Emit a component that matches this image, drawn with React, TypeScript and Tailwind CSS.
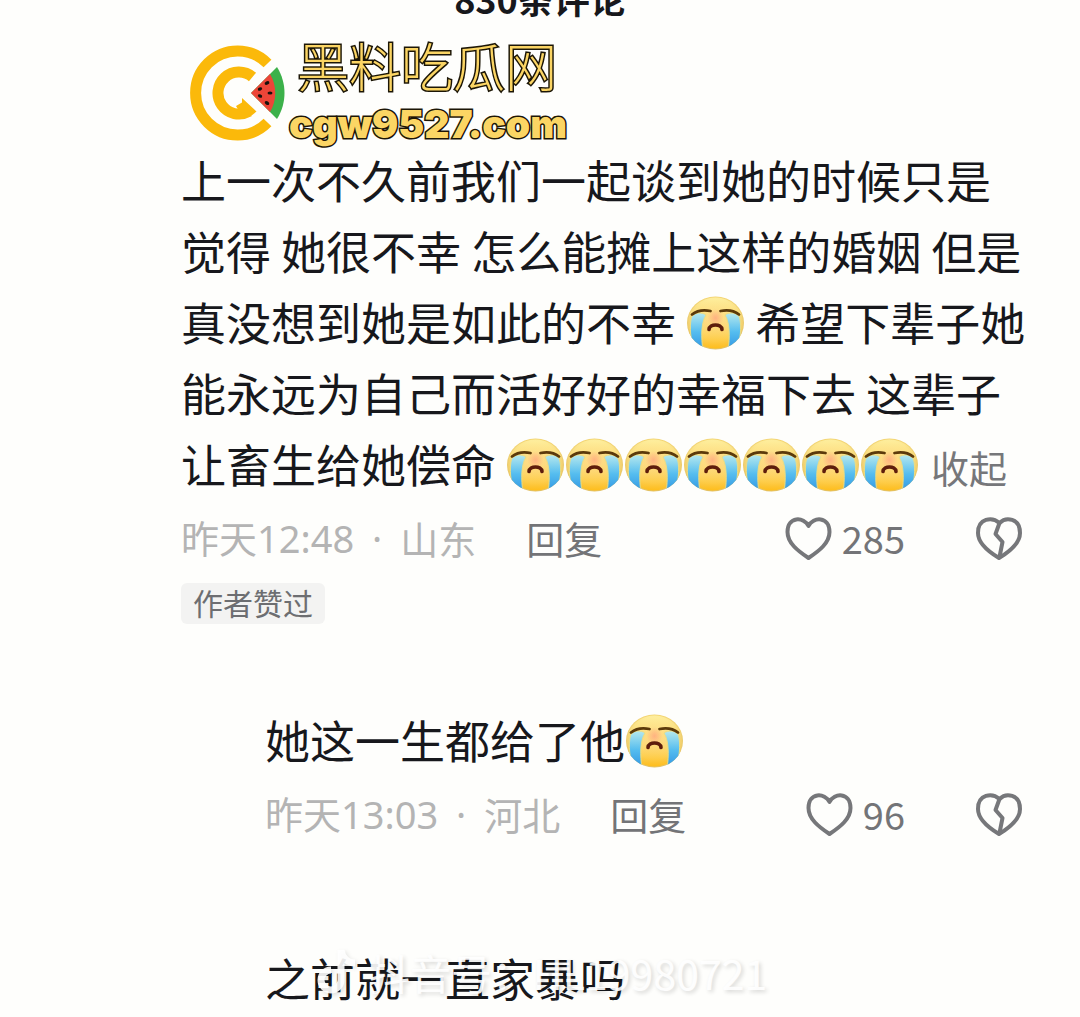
import type { ReactNode } from "react";

function CryFace() {
  return (
    <svg viewBox="0 0 59 56" className="inline-block h-[56px] w-[59px] align-[-10px]" role="img" aria-label="crying">
      <defs>
        <radialGradient id="face" cx="50%" cy="45%" r="56%">
          <stop offset="0" stopColor="#ffd98a" />
          <stop offset="0.7" stopColor="#fce07c" />
          <stop offset="1" stopColor="#dfbd62" />
        </radialGradient>
        <linearGradient id="chin" x1="0" y1="0" x2="0" y2="1">
          <stop offset="0" stopColor="#fff3a8" stopOpacity="0.8" />
          <stop offset="0.45" stopColor="#fdd97a" stopOpacity="0.2" />
          <stop offset="1" stopColor="#ffbe1c" />
        </linearGradient>
        <radialGradient id="nose">
          <stop offset="0" stopColor="#ffae80" stopOpacity="0.9" />
          <stop offset="1" stopColor="#ffae80" stopOpacity="0" />
        </radialGradient>
        <linearGradient id="tear" x1="0" y1="0" x2="0" y2="1">
          <stop offset="0" stopColor="#b5e8ee" />
          <stop offset="0.5" stopColor="#55bdef" />
          <stop offset="1" stopColor="#2f93e2" />
        </linearGradient>
        <clipPath id="head">
          <ellipse cx="29.5" cy="28" rx="28.5" ry="26.5" />
        </clipPath>
      </defs>
      <ellipse cx="29.5" cy="28" rx="28.5" ry="26.5" fill="url(#face)" />
      <ellipse cx="29.5" cy="28" rx="27.5" ry="25.5" fill="url(#chin)" />
      <ellipse cx="29.5" cy="23" rx="8" ry="9" fill="url(#nose)" />
      <g clipPath="url(#head)" fill="url(#tear)" stroke="#e8dc86" strokeWidth="1">
        <path d="M5.500 22C9 17 16 17 20 20C15 28 15 42 17 56H8C5 46 3 32 5.500 22Z" />
        <path d="M53.500 22C50 17 43 17 39 20C44 28 44 42 42 56H51C54 46 56 32 53.500 22Z" />
      </g>
      <path d="M6 19.500C11 15.500 17 14.500 24.500 16M53 19.500C48 15.500 42 14.500 34.500 16" fill="none" stroke="#5c3a0b" strokeWidth="2.800" strokeLinecap="round" />
      <path d="M23 34.500C23.500 28.500 35.500 28.500 36 34.500" fill="none" stroke="#5e1d0c" strokeWidth="3.600" strokeLinecap="round" />
    </svg>
  );
}

function Heart() {
  return (
    <svg viewBox="0 0 47 46" className="h-[46px] w-[47px]" fill="none" stroke="#76777a" strokeWidth="4" strokeLinejoin="round" aria-hidden="true">
      <path d="M23.500 11C19 1.500 2.500 1 2.500 17C2.500 28 13 36 23.500 43C34 36 44.500 28 44.500 17C44.500 1 28 1.500 23.500 11Z" />
    </svg>
  );
}

function BrokenHeart() {
  return (
    <svg viewBox="0 0 47 46" className="h-[46px] w-[47px]" fill="none" stroke="#76777a" strokeWidth="4" strokeLinejoin="round" aria-hidden="true">
      <path d="M24.500 8C17 1.500 3 3 3 18C3 29 14 37 24 43C34 37 45 29 45 18C45 3 31 1.500 24.500 8Z" />
      <path d="M24.500 8L20.500 19L27.500 27L24.500 42" />
    </svg>
  );
}

function Logo() {
  return (
    <svg viewBox="0 0 95 96" className="h-[96px] w-[95px] shrink-0 overflow-visible" aria-hidden="true">
      <g fill="none" stroke="#fbb90a" strokeWidth="11">
        <path d="M76.500 18.500A42 42 0 1 0 76.500 77.500" />
        <path d="M61.500 32A21 21 0 1 0 58 66.500" />
      </g>
      <path d="M51 53L65.500 66.500L60 71L48 66L45 61L51 57.500Z" fill="#fbb90a" />
      <path d="M60 48L86 22C96 38 96 58 86 74Z" fill="#3cb14a" />
      <path d="M60 48L79 29C86 41 86 55 79 67Z" fill="#ec4538" />
      <g fill="#17110c">
        <ellipse cx="76" cy="38" rx="2.500" ry="1.700" transform="rotate(-25 76 38)" />
        <ellipse cx="69" cy="44" rx="2.300" ry="1.600" transform="rotate(-25 69 44)" />
        <ellipse cx="79" cy="48" rx="2.500" ry="1.600" />
        <ellipse cx="69" cy="51" rx="2.300" ry="1.600" transform="rotate(25 69 51)" />
        <ellipse cx="76" cy="58" rx="2.500" ry="1.700" transform="rotate(35 76 58)" />
      </g>
    </svg>
  );
}

function Meta({ time, place, likes }: { time: string; place: string; likes: number }) {
  return (
    <div className="mt-[11px] flex h-[56px] items-center justify-between text-[38px] leading-[56px] whitespace-nowrap text-[#737477]">
      <div className="flex items-center">
        <span className="font-['Noto_Sans','Noto_Sans_CJK_SC',sans-serif] text-[#b4b4b4]">{time}</span>
        <span className="w-[46px] text-center font-['Noto_Sans',sans-serif] text-[#b4b4b4]">·</span>
        <span className="text-[#b4b4b4]">{place}</span>
        <button type="button" className="ml-[50px]">回复</button>
      </div>
      <div className="flex items-center gap-[70px]">
        <button type="button" aria-label={`${likes} likes`} className="flex items-center gap-[10px]">
          <Heart />
          <span>{likes}</span>
        </button>
        <button type="button" aria-label="Dislike">
          <BrokenHeart />
        </button>
      </div>
    </div>
  );
}

function CommentText({ children }: { children: ReactNode }) {
  return <p className="text-[45px] leading-[71px] whitespace-nowrap text-[#17181c]">{children}</p>;
}

export default function App() {
  return (
    <main className="min-h-screen overflow-hidden bg-[#fefefc] pr-[58px] pl-[181px] font-['Noto_Sans_CJK_SC','Noto_Sans',sans-serif]">
      <header className="-mr-[58px] -ml-[181px] flex h-[20px] items-end justify-center overflow-hidden">
        <h1 className="text-[36px] leading-[44px] font-bold text-[#17181c]">830条评论</h1>
      </header>

      <div className="flex h-[124px] items-start pt-[25px] pl-[10px]">
        <Logo />
        <div className="text-[#fbd564] [-webkit-text-stroke:3px_#1c1606] [paint-order:stroke_fill]">
          <div className="-mt-[10px] ml-[11px] text-[52px] leading-[60px] font-light">黑料吃瓜网</div>
          <div className="mt-[7px] ml-[3px] font-['Inter'] text-[39px] leading-[44px] font-black">cgw9527.com</div>
        </div>
      </div>

      <article>
        <CommentText>
          上一次不久前我们一起谈到她的时候只是
          <br />
          觉得 她很不幸 怎么能摊上这样的婚姻 但是
          <br />
          真没想到她是如此的不幸 <CryFace /> 希望下辈子她
          <br />
          能永远为自己而活好好的幸福下去 这辈子
          <br />
          让畜生给她偿命 <CryFace />
          <CryFace />
          <CryFace />
          <CryFace />
          <CryFace />
          <CryFace />
          <CryFace />
          <button type="button" className="ml-[12px] text-[38px] leading-[56px] text-[#76777a]">收起</button>
        </CommentText>
        <Meta time="昨天12:48" place="山东" likes={285} />
        <span className="mt-[17px] inline-block h-[41px] rounded-md bg-[#f3f3f2] px-[12px] text-[30px] leading-[39px] text-[#6d6e71]">作者赞过</span>
      </article>

      <article className="mt-[80px] pl-[84px]">
        <CommentText>
          她这一生都给了他
          <CryFace />
        </CommentText>
        <Meta time="昨天13:03" place="河北" likes={96} />
      </article>

      <article className="relative mt-[100px] pl-[84px]">
        <CommentText>之前就一直家暴吗</CommentText>
        <div className="pointer-events-none absolute top-0 left-[134px] flex items-center gap-[10px] text-[41px] leading-[60px] whitespace-nowrap text-white/90 [text-shadow:2px_2px_4px_rgb(0_0_0/0.16)]">
          <svg viewBox="0 0 44 52" className="h-[52px] w-[44px] drop-shadow-[2px_2px_2px_rgba(0,0,0,0.12)]" aria-hidden="true">
            <path d="M26 4V34A10 10 0 1 1 16 24M26 4C27 12 33 17 40 17" fill="none" stroke="#ffffff" strokeOpacity="0.9" strokeWidth="7" />
          </svg>
          <span>抖音号：HL19980721</span>
        </div>
      </article>
    </main>
  );
}
